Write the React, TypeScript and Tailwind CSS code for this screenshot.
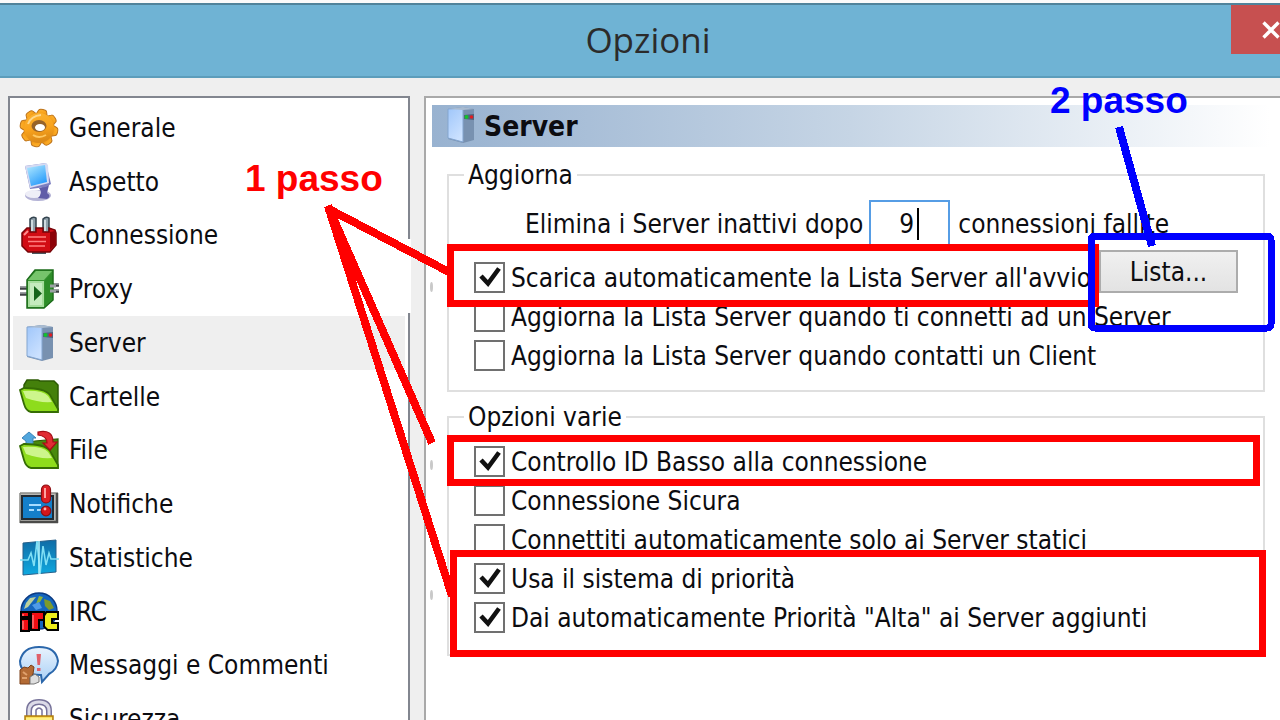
import React from "react";

function GearIcon() {
  const teeth = [0, 45, 90, 135, 180, 225, 270, 315];
  return (
    <svg viewBox="0 0 40 40" className="size-10" aria-hidden="true">
      <defs>
        <linearGradient id="gear" x1="0" y1="0" x2="0.4" y2="1">
          <stop offset="0" stopColor="#fbb535" />
          <stop offset="0.6" stopColor="#f9a31c" />
          <stop offset="1" stopColor="#dc8a18" />
        </linearGradient>
      </defs>
      <g transform="translate(20 20) rotate(12)">
        {teeth.map((a) => (
          <path key={a} d="M-6 -12 L-4 -17.500 Q-3.500 -19 0 -19 Q3.500 -19 4 -17.500 L6 -12 Z" transform={`rotate(${a})`} fill="url(#gear)" stroke="#bd7218" strokeWidth="1" />
        ))}
        <circle r="15" fill="url(#gear)" />
      </g>
      <ellipse cx="20" cy="18" rx="7.500" ry="6" fill="#96632a" />
      <ellipse cx="21" cy="19.500" rx="5" ry="3.500" fill="#fff" />
      <path d="M9 16 Q12 8 22 7" stroke="#ffd78a" strokeWidth="2" fill="none" />
      <path d="M14 27 Q20 31 27 27" stroke="#ffc860" strokeWidth="2" fill="none" />
    </svg>
  );
}

function MonitorIcon() {
  return (
    <svg viewBox="0 0 40 40" className="size-10" aria-hidden="true">
      <defs>
        <linearGradient id="scr" x1="0" y1="0" x2="0.6" y2="1">
          <stop offset="0" stopColor="#b4ebff" />
          <stop offset="1" stopColor="#2b9dfb" />
        </linearGradient>
      </defs>
      <ellipse cx="19" cy="33.500" rx="13" ry="5.500" fill="#b4b3d6" />
      <ellipse cx="15" cy="32" rx="9" ry="4" fill="#eeeef7" />
      <path d="M20 26 L30 23 L28 31 Q33 34 28 37 L19 36 Q24 31 20 26 Z" fill="#5f5ca8" />
      <path d="M6 4 L27 1 L32 22 L27 25 L11 27 Z" fill="#7d7fc0" />
      <path d="M6 4 L27 1 L29 3 L30 21 L11 26 Z" fill="#d5dbf3" />
      <path d="M8 6 L26 3 L28 20 L12 24 Z" fill="url(#scr)" />
    </svg>
  );
}

function PlugIcon() {
  return (
    <svg viewBox="0 0 40 40" className="size-10" aria-hidden="true">
      <path d="M11 18 V4 Q14 1 17 3 V18 Z" fill="#8fa0aa" stroke="#33434e" strokeWidth="1.500" />
      <path d="M24 18 V4 Q27 1 30 3 V18 Z" fill="#8fa0aa" stroke="#33434e" strokeWidth="1.500" />
      <path d="M13 5 V16 M26 5 V16" stroke="#e4edf2" strokeWidth="1.500" />
      <path d="M13 36 H27 V39 H13 Z" fill="#4a5960" />
      <path d="M8 13 H11 V17 H17 V13 H24 V17 H30 V13 L36 15 L37 18 V30 L31 37 H9 L3 31 V18 Z" fill="#d10c14" stroke="#760408" strokeWidth="1.500" />
      <path d="M31 17 L36 16 V30 L31 35 Z" fill="#8d0208" />
      <path d="M5 20 L9 16" stroke="#ff8e8e" strokeWidth="2" />
      <path d="M9 22 H27 M9 26.500 H27 M10 31 H26" stroke="#ff8080" strokeWidth="1.500" />
    </svg>
  );
}

function ProxyIcon() {
  return (
    <svg viewBox="0 0 40 40" className="size-10" aria-hidden="true">
      <path d="M1 19 H9 M1 25 H9 M30 16 H40 M30 22 H40" stroke="#3e4144" strokeWidth="3.500" />
      <path d="M1 18 H9 M1 24 H9 M30 15 H40 M30 21 H40" stroke="#c7cccf" strokeWidth="1.200" />
      <path d="M8 11 L16 1 H34 V31 L25 39 H8 Z" fill="#35932f" stroke="#1c6c1a" strokeWidth="1.500" />
      <path d="M9 11 L17 2 H33 L25 11 Z" fill="#76c46b" />
      <path d="M9 12 H25 V38 H9 Z" fill="#a5dd9c" />
      <path d="M11 14 H23 V36 H11 Z" fill="#c5ebbe" />
      <path d="M26 11 L33 4 V30 L26 37 Z" fill="#2d8c28" />
      <path d="M31 17 h6 M31 22 h6" stroke="#9ba1a4" strokeWidth="3" />
      <path d="M15 17 L23 24.500 L15 32 Z" fill="#15651a" />
    </svg>
  );
}

function ServerIcon() {
  return (
    <svg viewBox="0 0 40 40" className="size-10" aria-hidden="true">
      <defs>
        <linearGradient id="tower" x1="0" y1="0" x2="0.5" y2="1">
          <stop offset="0" stopColor="#9fc6fa" />
          <stop offset="1" stopColor="#cbe1ff" />
        </linearGradient>
      </defs>
      <path d="M8 4 L23 2 L34 4 V35 L23 38 L8 34 Z" fill="#7891b0" />
      <path d="M8 4 L23 3 V37 L8 33 Z" fill="url(#tower)" stroke="#83a5cf" strokeWidth="1" />
      <path d="M8 4 L23 2 L34 4 L23 5 Z" fill="#a9bbd0" />
      <path d="M24 10 L34 9 V15 L24 14 Z" fill="#50637e" />
      <circle cx="26.500" cy="12" r="2" fill="#12c22c" />
      <circle cx="31.500" cy="12" r="1.800" fill="#e01d22" />
    </svg>
  );
}

function FolderFront({ low }: { low?: boolean }) {
  return (
    <g transform={low ? "translate(0 3)" : undefined}>
      <path d="M1 13 L5 11 Q26 11 31 18 L39 32 V35 H12 Q7 34 5 27 Z" fill="#8edc1c" stroke="#356c04" strokeWidth="1.800" />
      <path d="M4 14 Q24 13 29 19 L33 25 Q20 26 7 21 Z" fill="#cdf58c" />
    </g>
  );
}

function FolderIcon() {
  return (
    <svg viewBox="0 0 40 40" className="size-10" aria-hidden="true">
      <path d="M5 8 L8 3 H19 L21 4 H35 L39 8 V33 L36 35 L5 14 Z" fill="#44800b" stroke="#2d5b04" strokeWidth="1.500" />
      <FolderFront />
    </svg>
  );
}

function FilesIcon() {
  return (
    <svg viewBox="0 0 40 40" className="size-10" aria-hidden="true">
      <path d="M5 14 L16 11 L39 9 V38 L32 36 L5 18 Z" fill="#498a0c" stroke="#2d5b04" strokeWidth="1.200" />
      <path d="M3 8 L10 2 L17 8 H14 V15 H7 V11 Z" fill="#51a6dd" stroke="#3d83b8" strokeWidth="1" />
      <FolderFront low />
      <path d="M19 2 Q34 -1 34 12 H38 L31 20 L24 13 H28 Q28 6 19 5 Z" fill="#e12c34" stroke="#a50d16" strokeWidth="1.200" />
    </svg>
  );
}

function NoticeIcon() {
  return (
    <svg viewBox="0 0 40 40" className="size-10" aria-hidden="true">
      <rect x="1" y="9" width="38" height="30" fill="#b9b9b5" />
      <path d="M1 9 H39 M1 9 V39" stroke="#8c8c88" strokeWidth="1.500" />
      <path d="M38 9 V39 M1 38 H39" stroke="#4b4b49" strokeWidth="2.500" />
      <rect x="3" y="12" width="31" height="23" fill="#147fca" stroke="#222b33" strokeWidth="2" />
      <path d="M10 21 H22 M10 26 H15 M18 26 H23" stroke="#a8dcff" strokeWidth="1.800" />
      <rect x="22.500" y="1" width="9" height="18" rx="4.500" fill="#dc1f24" stroke="#8d0e12" strokeWidth="1.200" />
      <circle cx="27" cy="27" r="4.800" fill="#d3161b" stroke="#8d0e12" strokeWidth="1.200" />
      <path d="M26 4 V14" stroke="#ffa3a0" strokeWidth="2" />
      <circle cx="26" cy="25" r="1.400" fill="#ffb0ae" />
    </svg>
  );
}

function StatsIcon() {
  return (
    <svg viewBox="0 0 40 40" className="size-10" aria-hidden="true">
      <defs>
        <linearGradient id="stat" x1="0" y1="0" x2="0" y2="1">
          <stop offset="0" stopColor="#0f6ca6" />
          <stop offset="1" stopColor="#0fa9e0" />
        </linearGradient>
      </defs>
      <path d="M4 5 L37 2 V34 L4 37 Z" fill="url(#stat)" stroke="#27608a" strokeWidth="1" />
      <path d="M1 22 H9 L12 15 L15 28 L18 3 L21 36 L24 8 L27 27 L30 15 L32 21 H40" stroke="#7fdff5" strokeWidth="1.600" fill="none" />
      <path d="M20 3 V36" stroke="#a8eefa" strokeWidth="1.600" />
    </svg>
  );
}

function IrcIcon() {
  const glyphs = "M3 21 H9 V24 H3 Z M3 28 H9 V38 H3 Z M13 21 H24 V27 H19 V37 H13 Z";
  const last = "M28 21 H38 V26 H32 V32 H38 V37 H29 L26 34 V24 Z";
  return (
    <svg viewBox="0 0 40 40" className="size-10" aria-hidden="true">
      <circle cx="20" cy="19" r="18" fill="#1465bd" stroke="#0b3a82" strokeWidth="1.500" />
      <path d="M7 11 L11 6 L17 5 L13 10 L9 15 L5 17 Z" fill="#bcd09c" />
      <path d="M20 4 L24 5 L21 10 L17 12 Z" fill="#8db53a" />
      <path d="M25 7 L31 9 L35 16 L30 18 L26 14 Z" fill="#7c9a2c" />
      <path d="M13 13 L20 10 L23 16 L17 18 Z" fill="#4f9be8" />
      <path d={glyphs} fill="#000" stroke="#000" strokeWidth="4" />
      <path d={last} fill="#000" stroke="#000" strokeWidth="4" />
      <path d={glyphs} fill="#f10d12" />
      <path d={last} fill="#eded1b" />
      <path d="M4 22 V24 M4 29 V37 M14 23 V36" stroke="#ff8c8c" strokeWidth="1.200" />
    </svg>
  );
}

function MessageIcon() {
  return (
    <svg viewBox="0 0 40 40" className="size-10" aria-hidden="true">
      <defs>
        <linearGradient id="msg" x1="0" y1="0" x2="0" y2="1">
          <stop offset="0" stopColor="#e9f3fd" />
          <stop offset="1" stopColor="#a9d0f6" />
        </linearGradient>
      </defs>
      <path d="M20 2 Q37 2 39 16 Q38 25 30 29 L23 37 L22 30 Q1 30 1 16 Q4 2 20 2 Z" fill="url(#msg)" stroke="#2b67ab" strokeWidth="2" />
      <path d="M17.500 9 H22 L21 20 H18.500 Z M18 23 H21.500 V26 H18 Z" fill="#e0606a" />
      <path d="M1 25 L5 22 L9 23 L12 20 L15 22 L14 29 L11 33 V39 H1 Z" fill="#b36a34" stroke="#7c4018" strokeWidth="1" />
      <path d="M4 27 L8 30 M3 33 H8" stroke="#e0a06c" strokeWidth="2" />
      <path d="M11 32 L16 29 L20 32 V37 L15 39 H11 Z" fill="#dedede" stroke="#777" strokeWidth="1" />
    </svg>
  );
}

function LockIcon() {
  return (
    <svg viewBox="0 0 40 40" className="size-10" aria-hidden="true">
      <path d="M10 18 V12 Q10 3 20 3 Q30 3 30 12 V18" fill="none" stroke="#77739a" strokeWidth="6" />
      <path d="M10 18 V12 Q10 3 20 3 Q30 3 30 12 V18" fill="none" stroke="#dcdbe8" strokeWidth="3" />
      <path d="M17 17 V11 Q20 7 23 11 V17" fill="none" stroke="#77739a" strokeWidth="1.500" />
      <rect x="6" y="17" width="28" height="22" fill="#f9cf2c" stroke="#b07c10" strokeWidth="1.500" />
      <path d="M7 20 H33" stroke="#fff088" strokeWidth="3" />
    </svg>
  );
}

const sections: { name: string; Icon: () => React.JSX.Element }[] = [
  { name: "Generale", Icon: GearIcon },
  { name: "Aspetto", Icon: MonitorIcon },
  { name: "Connessione", Icon: PlugIcon },
  { name: "Proxy", Icon: ProxyIcon },
  { name: "Server", Icon: ServerIcon },
  { name: "Cartelle", Icon: FolderIcon },
  { name: "File", Icon: FilesIcon },
  { name: "Notifiche", Icon: NoticeIcon },
  { name: "Statistiche", Icon: StatsIcon },
  { name: "IRC", Icon: IrcIcon },
  { name: "Messaggi e Commenti", Icon: MessageIcon },
  { name: "Sicurezza", Icon: LockIcon },
];

function CheckRow({ label, checked }: { label: string; checked?: boolean }) {
  return (
    <label className="flex h-[39px] items-center gap-1.5 whitespace-nowrap">
      <span className="grid size-[31px] shrink-0">
        <input
          type="checkbox"
          defaultChecked={checked}
          className="peer col-start-1 row-start-1 size-[31px] appearance-none border-2 border-[#707070] bg-white"
        />
        <svg viewBox="0 0 31 31" className="pointer-events-none invisible col-start-1 row-start-1 size-[31px] peer-checked:visible" aria-hidden="true">
          <path d="M7 14 L14 21.500 L25 6.500" fill="none" stroke="#111" strokeWidth="4.600" />
        </svg>
      </span>
      {label}
    </label>
  );
}

function Group({ title, children }: { title: string; children: React.ReactNode }) {
  return (
    <fieldset className="mr-[15px] ml-[21px] border-2 border-[#dfdfdf]">
      <legend className="ml-[15px] px-1 leading-8">{title}</legend>
      {children}
    </fieldset>
  );
}

function Annotations() {
  return (
    <div className="pointer-events-none absolute inset-0 overflow-hidden font-['Liberation_Sans',sans-serif] text-[37px] font-bold">
      <svg width="1280" height="720" viewBox="0 0 1280 720" className="absolute top-0 left-0" aria-hidden="true">
        <rect x="406" y="239" width="5" height="74" fill="#fff" />
        <g fill="#c9c9c9">
          <ellipse cx="431.500" cy="287" rx="1.500" ry="5" />
          <ellipse cx="431.500" cy="465" rx="1.500" ry="5" />
          <ellipse cx="431.500" cy="595" rx="1.500" ry="5" />
        </g>
        <g fill="none" stroke="#f00" strokeWidth="7" shapeRendering="crispEdges">
          <path d="M327 208 L449 272" strokeWidth="8" />
          <path d="M328 206 L432 443" strokeWidth="8" />
          <path d="M328 206 L452 596" strokeWidth="8" />
          <rect x="450.500" y="247.500" width="645" height="56" />
          <rect x="450.500" y="438" width="806" height="44" />
          <rect x="453" y="553" width="809" height="100" />
        </g>
        <g fill="none" stroke="#00f" strokeWidth="7" shapeRendering="crispEdges">
          <rect x="1091" y="236" width="180" height="92" rx="4" />
          <path d="M1119 127 L1152 246" strokeWidth="8" />
        </g>
      </svg>
      <span className="absolute top-[159px] left-[245px] leading-10 text-[#f00]">1 passo</span>
      <span className="absolute top-[81px] left-[1050px] leading-10 text-[#00f]">2 passo</span>
    </div>
  );
}

export default function App() {
  return (
    <div className="relative flex h-screen flex-col overflow-hidden bg-[#efefef] font-['DejaVu_Sans_Condensed','Noto_Sans',sans-serif] text-[26px] leading-8 text-[#0c0c10]">
      <header className="flex h-[78px] shrink-0 border-t-3 border-[#fafafa]">
        <div className="flex w-full items-start border-t-2 border-b-2 border-t-[#50839b] border-b-[#5c9dbb] bg-[#6fb3d4] pl-[65px]">
          <h1 className="flex-1 pt-[11px] text-center font-['Open_Sans','Noto_Sans',sans-serif] text-[35px] leading-12 font-normal text-[#2b2b2b]">Opzioni</h1>
          <button type="button" aria-label="Chiudi" className="flex h-[49px] w-[49px] items-center overflow-hidden bg-[#c75050] pl-[30px]">
            <svg viewBox="0 0 20 20" className="size-5 shrink-0" aria-hidden="true">
              <path d="M2.500 2.500 L17.500 17.500 M17.500 2.500 L2.500 17.500" stroke="#fff" strokeWidth="3.400" />
            </svg>
          </button>
        </div>
      </header>
      <main className="flex min-h-0 flex-1 gap-[14px] pt-[18px] pl-2">
        <nav className="w-[402px] shrink-0 overflow-hidden border-2 border-b-0 border-[#82868f] bg-white">
          <ul className="grid h-[648px] grid-rows-12 px-[3px] pt-[3px]">
            {sections.map(({ name, Icon }) => (
              <li key={name} className="min-h-0">
                <button
                  type="button"
                  aria-current={name === "Server" ? "page" : undefined}
                  className="flex h-full w-full items-center gap-[10px] pl-1.5 text-left whitespace-nowrap aria-[current=page]:bg-[#efefef]"
                >
                  <Icon />
                  {name}
                </button>
              </li>
            ))}
          </ul>
        </nav>
        <section className="min-w-0 flex-1 border-t-2 border-l-2 border-[#a9a9a9] bg-white">
          <h2 className="mt-[7px] mr-[10px] ml-1.5 flex h-[42px] items-start gap-1 bg-linear-to-r from-[#98b2d0] via-[#c6d5e5] to-white pl-2 text-[28px] leading-11 font-bold">
            <ServerIcon />
            Server
          </h2>
          <div className="mt-3 flex flex-col gap-[9px]">
            <Group title="Aggiorna">
              <div className="flex h-[59px] items-end gap-1.5 pb-0.5 pl-[76px] leading-12 whitespace-nowrap">
                <label htmlFor="fails">Elimina i Server inattivi dopo</label>
                <div className="relative h-12 w-[81px] shrink-0">
                  <input
                    id="fails"
                    type="text"
                    defaultValue="9"
                    className="size-full border-2 border-[#569de5] bg-white pl-7 outline-none"
                  />
                  <span className="pointer-events-none absolute top-2 left-12 h-8 w-0.5 bg-black" />
                </div>
                <span className="pl-0.5">connessioni fallite</span>
              </div>
              <div className="flex h-[47px] items-end justify-between px-[25px]">
                <CheckRow label="Scarica automaticamente la Lista Server all'avvio" checked />
                <button type="button" className="h-[43px] w-[139px] shrink-0 self-start border-2 border-[#acacac] bg-linear-to-b from-[#f0f0f0] to-[#e3e3e3]">
                  Lista...
                </button>
              </div>
              <div className="pb-[15px] pl-[25px]">
                <CheckRow label="Aggiorna la Lista Server quando ti connetti ad un Server" />
                <CheckRow label="Aggiorna la Lista Server quando contatti un Client" />
              </div>
            </Group>
            <Group title="Opzioni varie">
              <div className="pt-[9px] pb-[17px] pl-[25px]">
                <CheckRow label="Controllo ID Basso alla connessione" checked />
                <CheckRow label="Connessione Sicura" />
                <CheckRow label="Connettiti automaticamente solo ai Server statici" />
                <CheckRow label="Usa il sistema di priorità" checked />
                <CheckRow label={'Dai automaticamente Priorità "Alta" ai Server aggiunti'} checked />
              </div>
            </Group>
          </div>
        </section>
      </main>
      <Annotations />
    </div>
  );
}
